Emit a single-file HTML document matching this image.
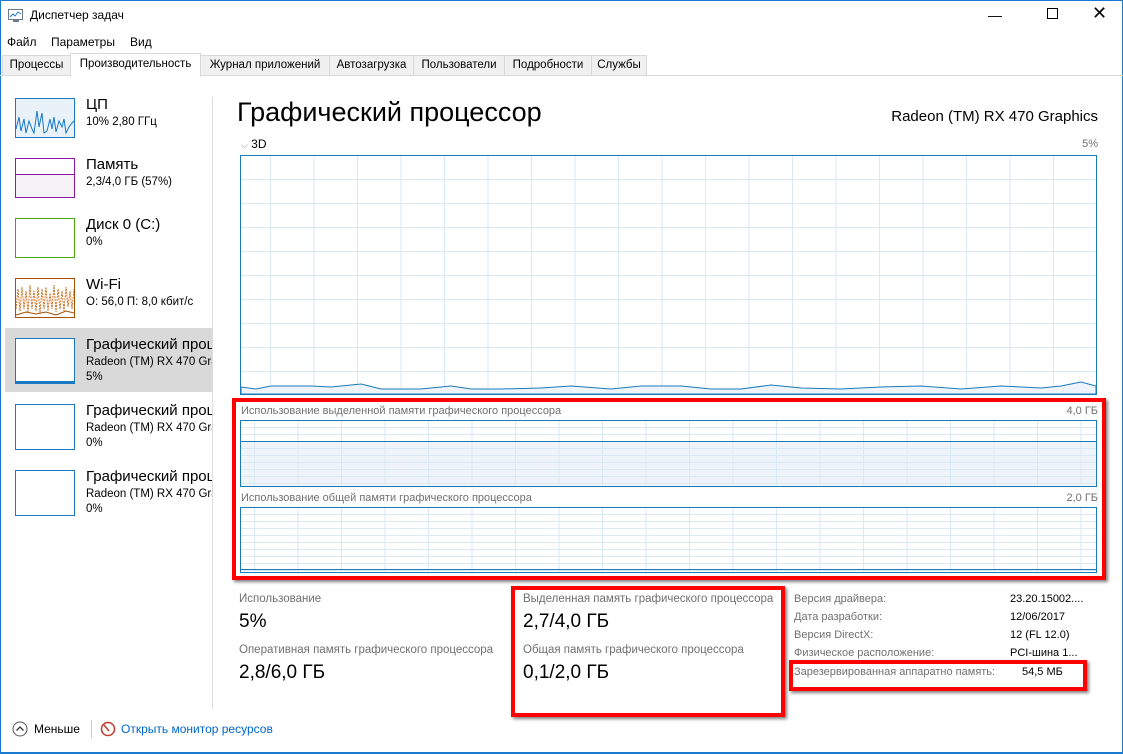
<!DOCTYPE html>
<html><head><meta charset="utf-8"><style>
*{margin:0;padding:0;box-sizing:border-box}
body{width:1123px;height:754px;overflow:hidden;background:#fff;font-family:"Liberation Sans",sans-serif;color:#000;position:relative;font-size:12px}
.abs{position:absolute;white-space:nowrap}
.win{position:absolute;left:0;top:0;width:1123px;height:754px;border:1px solid #1a7ad0;border-bottom:2px solid #1a7ad0}
.tab{position:absolute;top:55px;height:21px;background:#f0f0f0;border:1px solid #d9d9d9;font-size:11.5px;padding:3px 0 0;text-align:center;color:#000;white-space:nowrap}
.thumb{position:absolute;left:15px;width:60px;border:1px solid #1979c4;background:#fff}
.st{position:absolute;left:86px;font-size:11.5px;white-space:nowrap;overflow:hidden;width:126px}
.big{font-size:15px}
.g{position:absolute;border:1px solid #1a7ab8}
.red{position:absolute;border:4px solid #f00;box-shadow:2px 2px 3px rgba(0,0,0,.5)}
.lbl{color:#707070;font-size:11px}
</style></head><body>
<div class="win"></div>
<svg class="abs" style="left:8px;top:9px" width="16" height="14"><rect x="0.5" y="0.5" width="14" height="10" fill="#fff" stroke="#6b7b8b"/><polyline points="2,8 5,5 7,7 10,3 13,5" fill="none" stroke="#1a7ad0"/><rect x="5" y="11" width="6" height="2" fill="#6b7b8b"/></svg>
<div class="abs" style="left:30px;top:8px;font-size:12px">Диспетчер задач</div>
<div class="abs" style="left:988px;top:7px;font-size:14px">—</div>
<div class="abs" style="left:1047px;top:8px;width:11px;height:11px;border:1px solid #000"></div>
<div class="abs" style="left:1092px;top:3px;font-size:18px;font-weight:300">✕</div>
<div class="abs" style="left:7px;top:35px">Файл</div>
<div class="abs" style="left:51px;top:35px">Параметры</div>
<div class="abs" style="left:130px;top:35px">Вид</div>
<div class="abs" style="left:0;top:75px;width:1123px;height:1px;background:#d9d9d9"></div>
<div class="tab" style="left:2px;width:69px">Процессы</div>
<div class="tab" style="left:200px;width:130px">Журнал приложений</div>
<div class="tab" style="left:329px;width:85px">Автозагрузка</div>
<div class="tab" style="left:413px;width:92px">Пользователи</div>
<div class="tab" style="left:504px;width:88px">Подробности</div>
<div class="tab" style="left:591px;width:56px">Службы</div>
<div class="tab" style="left:70px;top:53px;height:24px;width:131px;background:#fff;border-bottom:none;padding-top:4px">Производительность</div>
<div class="abs" style="left:212px;top:97px;width:1px;height:612px;background:#ddd"></div>
<div class="abs" style="left:5px;top:328px;width:207px;height:64px;background:#d9d9d9"></div>
<div class="thumb" style="top:98px;height:40px;background:#e9f2f9"><svg width="58" height="38"><polyline points="0,30 3,18 5,32 8,20 10,34 13,22 16,30 18,34 21,12 23,28 26,14 28,34 31,32 34,20 36,30 38,18 40,33 43,22 46,28 48,20 50,34 53,28 56,24 58,22" fill="none" stroke="#1979c4"/></svg></div>
<div class="st big" style="top:96px">ЦП</div><div class="st" style="top:116px">10% 2,80 ГГц</div>
<div class="thumb" style="top:158px;height:40px;border-color:#8b18a8"><div style="position:absolute;left:0;right:0;top:15px;bottom:0;background:#f4f2f4;border-top:1px solid #8b18a8"></div></div>
<div class="st big" style="top:156px">Память</div><div class="st" style="top:176px">2,3/4,0 ГБ (57%)</div>
<div class="thumb" style="top:218px;height:40px;border-color:#4da60c"></div>
<div class="st big" style="top:216px">Диск 0 (C:)</div><div class="st" style="top:236px">0%</div>
<div class="thumb" style="top:278px;height:40px;border-color:#a74f01"><svg width="58" height="38"><polyline points="0,30 2,10 4,32 6,8 8,30 10,12 12,34 14,6 16,30 18,12 20,32 22,8 24,34 26,10 28,30 30,8 32,32 34,14 36,30 38,6 40,33 42,10 44,30 46,12 48,32 50,8 52,28 54,12 56,30 58,10" fill="none" stroke="#d07020" stroke-dasharray="2,1"/><polyline points="0,36 10,33 20,35 30,33 40,36 50,32 58,34" fill="none" stroke="#a74f01"/></svg></div>
<div class="st big" style="top:276px">Wi-Fi</div><div class="st" style="top:296px">О: 56,0 П: 8,0 кбит/с</div>
<div class="thumb" style="top:338px;height:46px"><div style="position:absolute;left:0;right:0;bottom:0;height:2px;background:#1979c4"></div></div>
<div class="st big" style="top:336px">Графический процессор</div><div class="st" style="top:356px">Radeon (TM) RX 470 Graphics</div><div class="st" style="top:371px">5%</div>
<div class="thumb" style="top:404px;height:46px"></div>
<div class="st big" style="top:402px">Графический процессор</div><div class="st" style="top:422px">Radeon (TM) RX 470 Graphics</div><div class="st" style="top:437px">0%</div>
<div class="thumb" style="top:470px;height:46px"></div>
<div class="st big" style="top:468px">Графический процессор</div><div class="st" style="top:488px">Radeon (TM) RX 470 Graphics</div><div class="st" style="top:503px">0%</div>
<div class="abs" style="left:237px;top:97px;font-size:27px">Графический процессор</div>
<div class="abs" style="right:25px;top:108px;font-size:15px">Radeon (TM) RX 470 Graphics</div>
<div class="abs" style="left:241px;top:137px;font-size:12px"><span style="color:#888;font-size:9px">⌵</span> 3D</div>
<div class="abs lbl" style="right:25px;top:138px">5%</div>
<div class="g" style="left:240px;top:155px;width:857px;height:240px;background:
repeating-linear-gradient(90deg,transparent 0 29px,#d9eaf4 29px 30px,transparent 30px 43.5px),
repeating-linear-gradient(180deg,transparent 0 23px,#d9eaf4 23px 24px)">
<svg style="position:absolute;left:0;top:0" width="855" height="238"><polygon points="0,231 15,233 30,230 70,230 90,231 120,228 140,233 180,233 210,230 230,233 260,233 300,232 330,230 370,233 400,230 440,230 470,233 500,233 530,229 560,232 600,233 640,231 680,230 720,233 760,230 800,232 820,230 840,226 855,230 855,238 0,238" fill="#eef4fa" stroke="#1a7ab8"/></svg></div>
<div class="red" style="left:232px;top:398px;width:874px;height:182px"></div>
<div class="abs lbl" style="left:241px;top:405px">Использование выделенной памяти графического процессора</div>
<div class="abs lbl" style="right:25px;top:405px">4,0 ГБ</div>
<div class="g" style="left:240px;top:420px;width:857px;height:67px;background:linear-gradient(180deg,#fff 0 20px,#eef4fa 20px)">
<div style="position:absolute;inset:0;background:repeating-linear-gradient(90deg,transparent 0 13px,#d9eaf4 13px 14px,transparent 14px 43.5px),repeating-linear-gradient(180deg,transparent 0 6px,#d9eaf4 6px 7px)"></div>
<div style="position:absolute;left:0;right:0;top:20px;height:1px;background:#1a7ab8"></div></div>
<div class="abs lbl" style="left:241px;top:492px">Использование общей памяти графического процессора</div>
<div class="abs lbl" style="right:25px;top:492px">2,0 ГБ</div>
<div class="g" style="left:240px;top:507px;width:857px;height:66px;background:repeating-linear-gradient(90deg,transparent 0 13px,#d9eaf4 13px 14px,transparent 14px 43.5px),repeating-linear-gradient(180deg,transparent 0 6px,#d9eaf4 6px 7px)">
<div style="position:absolute;left:0;right:0;bottom:2px;height:1px;background:#1a7ab8"></div></div>
<div class="abs lbl" style="left:239px;top:593px;font-size:11.5px">Использование</div>
<div class="abs" style="left:239px;top:611px;font-size:19px">5%</div>
<div class="abs lbl" style="left:239px;top:644px;font-size:11.5px">Оперативная память графического процессора</div>
<div class="abs" style="left:239px;top:662px;font-size:19px">2,8/6,0 ГБ</div>
<div class="red" style="left:511px;top:586px;width:274px;height:131px"></div>
<div class="abs lbl" style="left:523px;top:593px;font-size:11.5px">Выделенная память графического процессора</div>
<div class="abs" style="left:523px;top:611px;font-size:19px">2,7/4,0 ГБ</div>
<div class="abs lbl" style="left:523px;top:644px;font-size:11.5px">Общая память графического процессора</div>
<div class="abs" style="left:523px;top:662px;font-size:19px">0,1/2,0 ГБ</div>
<div class="abs lbl" style="left:794px;top:593px">Версия драйвера:</div><div class="abs" style="left:1010px;top:593px;font-size:11px">23.20.15002....</div>
<div class="abs lbl" style="left:794px;top:611px">Дата разработки:</div><div class="abs" style="left:1010px;top:611px;font-size:11px">12/06/2017</div>
<div class="abs lbl" style="left:794px;top:629px">Версия DirectX:</div><div class="abs" style="left:1010px;top:629px;font-size:11px">12 (FL 12.0)</div>
<div class="abs lbl" style="left:794px;top:647px">Физическое расположение:</div><div class="abs" style="left:1010px;top:647px;font-size:11px">PCI-шина 1...</div>
<div class="red" style="left:789px;top:660px;width:298px;height:31px"></div>
<div class="abs lbl" style="left:794px;top:666px">Зарезервированная аппаратно память:</div><div class="abs" style="left:1022px;top:666px;font-size:11px">54,5 МБ</div>
<svg class="abs" style="left:12px;top:721px" width="16" height="16"><circle cx="8" cy="8" r="7" fill="#fff" stroke="#555"/><polyline points="4.5,9.5 8,6 11.5,9.5" fill="none" stroke="#333" stroke-width="1.3"/></svg>
<div class="abs" style="left:34px;top:722px">Меньше</div>
<div class="abs" style="left:91px;top:720px;width:1px;height:18px;background:#ccc"></div>
<svg class="abs" style="left:100px;top:721px" width="16" height="16"><circle cx="8" cy="8" r="6.5" fill="#fff" stroke="#c0392b" stroke-width="1.5"/><line x1="4" y1="4" x2="9" y2="10" stroke="#c0392b" stroke-width="1.5"/></svg>
<div class="abs" style="left:121px;top:722px;color:#0066cc">Открыть монитор ресурсов</div>
</body></html>
